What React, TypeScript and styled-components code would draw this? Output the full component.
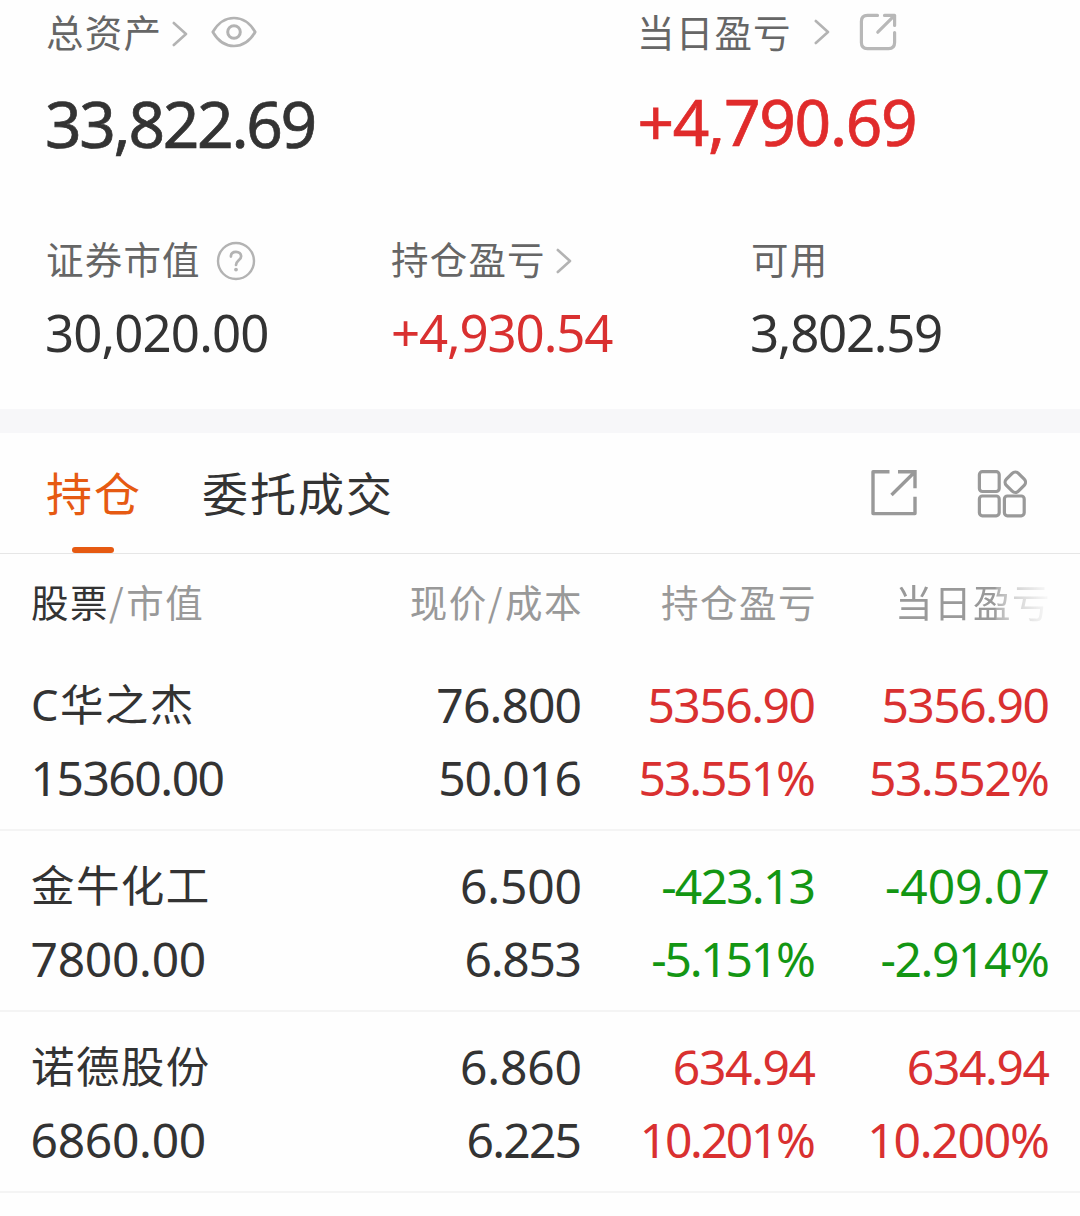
import React from "react";
import styled, { createGlobalStyle } from "styled-components";

const RED = "#d93030";
const GREEN = "#139613";
const DARK = "#333333";

const GlobalStyle = createGlobalStyle`
  body {
    margin: 0;
    background: #fefefe;
    font-family: "Noto Sans", "Noto Sans CJK SC", sans-serif;
    color: ${DARK};
  }
`;

const Page = styled.main`
  width: 1080px;
  height: 1216px;
  overflow: hidden;
  display: flex;
  flex-direction: column;
`;

const Summary = styled.section`
  height: 409px;
  flex: none;
  display: flex;
  flex-direction: column;
`;

const SummaryRow = styled.div<{ $columns: string; $top: number }>`
  display: grid;
  grid-template-columns: ${(p) => p.$columns};
  padding-left: 46px;
  margin-top: ${(p) => p.$top}px;
`;

const LabelLine = styled.div`
  height: 54px;
  display: flex;
  align-items: center;
`;

const Label = styled.span`
  font-size: 37.5px;
  line-height: 52px;
  padding-bottom: 2px;
  letter-spacing: 1.2px;
  color: #666666;
  white-space: nowrap;
`;

const IconSlot = styled.span<{ $left: number; $lift?: number }>`
  display: flex;
  margin-left: ${(p) => p.$left}px;
  padding-bottom: ${(p) => p.$lift || 0}px;
`;

const Total = styled.div<{ $track: number; $color?: string; $top: number; $left: number }>`
  margin-top: ${(p) => p.$top}px;
  margin-left: ${(p) => p.$left}px;
  font-size: 64px;
  line-height: 80px;
  letter-spacing: ${(p) => p.$track}px;
  color: ${(p) => p.$color || DARK};
  -webkit-text-stroke: 0.7px currentColor;
  white-space: nowrap;
`;

const Amount = styled.div<{ $track: number; $color?: string }>`
  margin-top: 9px;
  margin-left: ${(p) => (p.$color ? 0 : -1)}px;
  font-size: 51px;
  line-height: 70px;
  letter-spacing: ${(p) => p.$track}px;
  color: ${(p) => p.$color || DARK};
  white-space: nowrap;
`;

const Band = styled.div`
  height: 24px;
  flex: none;
  background: #f7f7f9;
`;

const TabBar = styled.nav`
  height: 121px;
  flex: none;
  box-sizing: border-box;
  display: flex;
  padding: 0 53px 0 46px;
  border-bottom: 1px solid #e6e6e6;
`;

const Tab = styled.div<{ $active?: boolean }>`
  display: flex;
  flex-direction: column;
  align-items: center;
  justify-content: space-between;
  margin-right: 60px;
  padding-top: 25px;
  font-size: 46px;
  line-height: 70px;
  letter-spacing: 2px;
  white-space: nowrap;
  color: ${(p) => (p.$active ? "#e65a12" : DARK)};
`;

const Underline = styled.span`
  width: 42px;
  height: 6px;
  margin-right: 2px;
  border-radius: 3px;
  background: #e65a12;
`;

const Tools = styled.div`
  display: flex;
  gap: 59px;
  margin-left: auto;
  padding-top: 36px;
`;

const Table = styled.section`
  display: flex;
  flex-direction: column;
`;

const tableColumns = `
  display: grid;
  grid-template-columns: 1fr 234px 234px 234px;
  padding: 0 31px;
`;

const HeadRow = styled.div`
  ${tableColumns}
  height: 96px;
  line-height: 98px;
  font-size: 37.5px;
  letter-spacing: 1.5px;
  color: #999999;
  white-space: nowrap;
`;

const HeadCell = styled.div<{ $right?: boolean; $fade?: boolean }>`
  text-align: ${(p) => (p.$right ? "right" : "left")};
  margin-right: ${(p) => (p.$right ? -2 : 0)}px;
  ${(p) =>
    p.$fade &&
    "mask-image: linear-gradient(to right, #000 180px, rgba(0,0,0,0.75) 182px, rgba(0,0,0,0.42) 199px, rgba(0,0,0,0.08) 231px);"}
`;

const Strong = styled.span`
  color: ${DARK};
`;

const Slash = styled.span`
  font-family: "Noto Sans CJK SC", sans-serif;
  line-height: 1;
  padding: 0 1px 0 0;
`;

const Row = styled.div`
  ${tableColumns}
  box-sizing: border-box;
  height: 181px;
  padding-top: 18px;
  border-bottom: 2px solid #f4f4f4;
`;

const Cell = styled.div<{ $color?: string; $right?: boolean }>`
  display: flex;
  flex-direction: column;
  align-items: ${(p) => (p.$right ? "flex-end" : "flex-start")};
  color: ${(p) => p.$color || DARK};
`;

const Name = styled.div`
  font-size: 43.5px;
  line-height: 73px;
  letter-spacing: 1.4px;
  white-space: nowrap;
`;

const Figure = styled.div<{ $track: number; $right?: boolean }>`
  font-size: 48px;
  line-height: 73px;
  letter-spacing: ${(p) => p.$track}px;
  margin-right: ${(p) => (p.$right ? -1 - p.$track : 0)}px;
  margin-left: ${(p) => (p.$right ? 0 : -0.5)}px;
  white-space: nowrap;
`;

const Chevron = () => (
  <svg width="16" height="26" viewBox="0 0 16 26" fill="none" stroke="#b3b3b3" strokeWidth="2.6" strokeLinecap="round" strokeLinejoin="round">
    <path d="M1.8 2 L14 13 L1.8 24" />
  </svg>
);

const Eye = () => (
  <svg width="46" height="32" viewBox="0 0 46 32" fill="none" stroke="#b3b3b3" strokeWidth="2.7">
    <path d="M1.8 16 C7 7 14 2 23 2 C32 2 39 7 44.2 16 C39 25 32 30 23 30 C14 30 7 25 1.8 16 Z" strokeLinejoin="round" />
    <circle cx="23" cy="16" r="6.3" strokeWidth="3" />
  </svg>
);

const RoundShare = () => (
  <svg width="38" height="38" viewBox="0 0 38 38" fill="none" stroke="#b8b8b8" strokeWidth="3.2" strokeLinecap="round" strokeLinejoin="round">
    <path d="M18.5 2.4 H8.4 Q2.4 2.4 2.4 8.4 V29.6 Q2.4 35.6 8.4 35.6 H29.6 Q35.6 35.6 35.6 29.6 V19.5" />
    <path d="M25.5 2.4 H35.6 V12.5 M35.6 2.4 L18.8 19.2" />
  </svg>
);

const Help = () => (
  <svg width="40" height="40" viewBox="0 0 40 40" fill="none" stroke="#b3b3b3" strokeLinecap="round">
    <circle cx="20" cy="20" r="18" strokeWidth="2.4" />
    <path d="M14.9 15.6 C14.9 12.6 17 10.8 20 10.8 C23 10.8 25.1 12.7 25.1 15.4 C25.1 19.2 20 19.6 20 24" strokeWidth="2.7" />
    <circle cx="20" cy="28.6" r="1.9" fill="#b3b3b3" stroke="none" />
  </svg>
);

const SquareShare = () => (
  <svg width="48" height="48" viewBox="0 0 48 48" fill="none" stroke="#999999" strokeWidth="3.4" strokeLinejoin="round">
    <path d="M19.5 2.8 H3 V44.6 H45 V27.7" />
    <path d="M28 2.8 H45 V19.2 M45 2.8 L21.5 26" strokeLinejoin="miter" />
  </svg>
);

const Apps = () => (
  <svg width="50" height="50" viewBox="0 0 50 50" fill="none" stroke="#999999" strokeWidth="3.2" strokeLinejoin="round">
    <rect x="2.4" y="2.7" width="19.8" height="19.8" rx="3" />
    <rect x="2.4" y="27" width="19.8" height="19.8" rx="3" />
    <rect x="27.4" y="27" width="19.8" height="19.8" rx="3" />
    <rect x="29.8" y="4.7" width="17" height="17" rx="4.4" transform="rotate(45 38.3 13.2)" />
  </svg>
);

type Entry = [text: string, track: number];
interface Holding {
  name: string;
  value: Entry;
  price: Entry[];
  position: Entry[];
  today: Entry[];
  color: string;
}

const holdings: Holding[] = [
  {
    name: "C华之杰",
    value: ["15360.00", -1.5],
    price: [["76.800", -0.9], ["50.016", -1.3]],
    position: [["5356.90", -1.5], ["53.551%", -2.1]],
    today: [["5356.90", -1.5], ["53.552%", -1.5]],
    color: RED,
  },
  {
    name: "金牛化工",
    value: ["7800.00", -0.3],
    price: [["6.500", -0.2], ["6.853", -1.3]],
    position: [["-423.13", -1.8], ["-5.151%", -2.2]],
    today: [["-409.07", -0.1], ["-2.914%", -1.4]],
    color: GREEN,
  },
  {
    name: "诺德股份",
    value: ["6860.00", -0.3],
    price: [["6.860", -0.2], ["6.225", -1.8]],
    position: [["634.94", -1.4], ["10.201%", -2.3]],
    today: [["634.94", -1.4], ["10.200%", -1.2]],
    color: RED,
  },
];

const Figures = ({ items, color }: { items: Entry[]; color?: string }) => (
  <Cell $right $color={color}>
    {items.map(([text, track]) => (
      <Figure key={text} $right $track={track}>{text}</Figure>
    ))}
  </Cell>
);

export default function App() {
  return (
    <Page>
      <GlobalStyle />
      <Summary>
        <SummaryRow $columns="591px 1fr" $top={7}>
          <div>
            <LabelLine>
              <Label>总资产</Label>
              <IconSlot $left={10}><Chevron /></IconSlot>
              <IconSlot $left={23} $lift={5}><Eye /></IconSlot>
            </LabelLine>
            <Total $track={-2.3} $top={23} $left={-1}>33,822.69</Total>
          </div>
          <div>
            <LabelLine>
              <Label>当日盈亏</Label>
              <IconSlot $left={22} $lift={5}><Chevron /></IconSlot>
              <IconSlot $left={29} $lift={5}><RoundShare /></IconSlot>
            </LabelLine>
            <Total $track={-1.3} $top={21} $left={0.5} $color="#e02b2b">+4,790.69</Total>
          </div>
        </SummaryRow>
        <SummaryRow $columns="345px 360px 1fr" $top={70}>
          <div>
            <LabelLine>
              <Label>证券市值</Label>
              <IconSlot $left={15}><Help /></IconSlot>
            </LabelLine>
            <Amount $track={-0.9}>30,020.00</Amount>
          </div>
          <div>
            <LabelLine>
              <Label>持仓盈亏</Label>
              <IconSlot $left={10}><Chevron /></IconSlot>
            </LabelLine>
            <Amount $track={-1.15} $color={RED}>+4,930.54</Amount>
          </div>
          <div>
            <LabelLine>
              <Label>可用</Label>
            </LabelLine>
            <Amount $track={-1.3}>3,802.59</Amount>
          </div>
        </SummaryRow>
      </Summary>
      <Band />
      <TabBar>
        <Tab $active>
          持仓
          <Underline />
        </Tab>
        <Tab>委托成交</Tab>
        <Tools>
          <SquareShare />
          <Apps />
        </Tools>
      </TabBar>
      <Table>
        <HeadRow>
          <HeadCell><Strong>股票</Strong><Slash>/</Slash>市值</HeadCell>
          <HeadCell $right>现价<Slash>/</Slash>成本</HeadCell>
          <HeadCell $right>持仓盈亏</HeadCell>
          <HeadCell $right $fade>当日盈亏</HeadCell>
        </HeadRow>
        {holdings.map((h) => (
          <Row key={h.name}>
            <Cell>
              <Name>{h.name}</Name>
              <Figure $track={h.value[1]}>{h.value[0]}</Figure>
            </Cell>
            <Figures items={h.price} />
            <Figures items={h.position} color={h.color} />
            <Figures items={h.today} color={h.color} />
          </Row>
        ))}
      </Table>
    </Page>
  );
}
